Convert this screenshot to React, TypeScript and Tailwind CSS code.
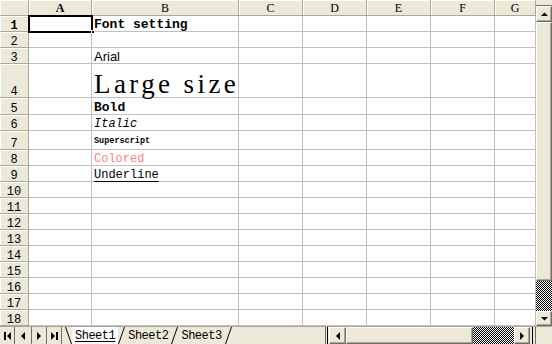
import React from "react";

const MONO = { fontFamily: '"Liberation Mono", "DejaVu Sans Mono", monospace' };
const SERIF = { fontFamily: '"Liberation Serif", "Times New Roman", serif' };

const rowNums = Array.from({ length: 18 }, (_, i) => i + 1);
const cols = ["A", "B", "C", "D", "E", "F", "G"];

function Tri({ dir }: { dir: "up" | "down" | "left" | "right" }) {
  const pts =
    dir === "up"
      ? "0,4 7,4 3.5,0.5"
      : dir === "down"
      ? "0,0 7,0 3.5,3.5"
      : dir === "left"
      ? "4,0 4,8 0,4"
      : "0,0 0,8 4,4";
  const w = dir === "up" || dir === "down" ? 7 : 4;
  const h = dir === "up" || dir === "down" ? 4 : 8;
  return (
    <svg width={w} height={h} viewBox={`0 0 ${w} ${h}`}>
      <polygon points={pts} fill="#000" />
    </svg>
  );
}

function cellContent(r: number) {
  switch (r) {
    case 1:
      return <span className="font-bold text-[13px] leading-[10px] mb-[1px]" style={MONO}>Font setting</span>;
    case 3:
      return <span className="text-[13px] leading-[10px] mb-[1px]" style={{ fontFamily: '"Liberation Sans", Arial, sans-serif' }}>Arial</span>;
    case 4:
      return <span className="text-[27px] leading-[20px] tracking-[3.4px] mb-[3px]" style={SERIF}>Large size</span>;
    case 5:
      return <span className="font-bold text-[13px] leading-[10px] mb-[1px]" style={MONO}>Bold</span>;
    case 6:
      return <span className="italic text-[12px] leading-[10px] mb-[1px]" style={MONO}>Italic</span>;
    case 7:
      return <span className="font-bold text-[8.5px] leading-[8px] mb-[4px]" style={MONO}>Superscript</span>;
    case 8:
      return <span className="text-[12px] leading-[10px] mb-[1px] text-[#FF8080]" style={MONO}>Colored</span>;
    case 9:
      return <span className="text-[12px] leading-[10px] mb-[1px] underline underline-offset-[3px]" style={MONO}>Underline</span>;
    default:
      return null;
  }
}

const checker =
  "bg-[repeating-conic-gradient(#000_0_25%,#fff_0_50%)] bg-[length:2px_2px]";

function Btn3D({ children, className = "" }: { children?: React.ReactNode; className?: string }) {
  return (
    <div
      className={
        "flex items-center justify-center bg-[#ECE9D8] border border-t-[#fff] border-l-[#fff] border-b-[#716F64] border-r-[#716F64] shadow-[inset_-1px_-1px_0_#ACA899] " +
        className
      }
    >
      {children}
    </div>
  );
}

function Slash({ back }: { back?: boolean }) {
  return (
    <svg width="7" height="17" viewBox="0 0 7 17" className="shrink-0">
      {back ? (
        <line x1="0.5" y1="0" x2="6.5" y2="17" stroke="#000" strokeWidth="1" />
      ) : (
        <line x1="6.5" y1="0" x2="0.5" y2="17" stroke="#000" strokeWidth="1" />
      )}
    </svg>
  );
}

export default function App() {
  return (
    <div className="w-[552px] h-[344px] overflow-hidden bg-white flex flex-col select-none">
      <div className="flex h-[326px]">
        {/* sheet grid */}
        <div className="relative w-[536px] grid grid-cols-[29px_63px_147px_64px_64px_64px_64px_41px] grid-rows-[16px_16px_16px_16px_34px_17px_16px_19px_16px_16px_16px_16px_16px_16px_16px_16px_16px_16px_16px]">
          <div className="bg-[#ECE9D8] border-r border-b border-[#ACA899] shadow-[inset_1px_1px_0_#fff]" />
          {cols.map((c) => (
            <div
              key={c}
              className={
                "bg-[#ECE9D8] border-r border-b border-[#ACA899] shadow-[inset_1px_1px_0_#fff] flex items-center justify-center text-[12px] leading-none " +
                (c === "A" ? "font-bold" : "")
              }
              style={SERIF}
            >
              {c}
            </div>
          ))}
          {rowNums.map((r) => (
            <React.Fragment key={r}>
              <div
                className={
                  "bg-[#ECE9D8] border-r border-b border-[#ACA899] shadow-[inset_1px_1px_0_#fff] flex items-end justify-center text-[12px] leading-[10px] " +
                  (r === 1 ? "font-bold" : "")
                }
                style={MONO}
              >
                {r}
              </div>
              {cols.map((c) => (
                <div
                  key={c}
                  className="border-r border-b border-[#C0C0C0] flex items-end pl-[2px] whitespace-nowrap overflow-visible"
                >
                  {c === "B" ? cellContent(r) : null}
                </div>
              ))}
            </React.Fragment>
          ))}
          {/* active cell */}
          <div className="absolute left-[28px] top-[15px] w-[65px] h-[18px] border-2 border-black pointer-events-none" />
          <div className="absolute left-[91px] top-[30px] w-[4px] h-[4px] bg-black border border-white pointer-events-none" />
        </div>
        {/* vertical scrollbar */}
        <div className="w-[16px] flex flex-col bg-[#ECE9D8]">
          <div className="h-[6px] border-b border-[#716F64] bg-[#ECE9D8]" />
          <Btn3D className="h-[16px]">
            <Tri dir="up" />
          </Btn3D>
          <Btn3D className="flex-1" />
          <div className={"h-[30px] " + checker} />
          <Btn3D className="h-[15px]">
            <Tri dir="down" />
          </Btn3D>
        </div>
      </div>
      {/* bottom bar */}
      <div className="h-[18px] flex bg-[#ECE9D8] border-t border-[#ACA899]">
        <div className="flex">
          <div className="w-[15px] flex items-center justify-center gap-[1px] border-r border-[#716F64]">
            <div className="w-[2px] h-[8px] bg-black" />
            <Tri dir="left" />
          </div>
          <div className="w-[17px] flex items-center justify-center border-r border-[#716F64]">
            <Tri dir="left" />
          </div>
          <div className="w-[15px] flex items-center justify-center border-r border-[#716F64]">
            <Tri dir="right" />
          </div>
          <div className="w-[15px] flex items-center justify-center gap-[1px] border-r border-[#716F64]">
            <Tri dir="right" />
            <div className="w-[2px] h-[8px] bg-black" />
          </div>
        </div>
        <div className="flex items-stretch ml-[3px]" style={MONO}>
          <Slash back />
          <div className="px-[3px] bg-white flex items-center text-[12px] tracking-[-0.5px] leading-none underline underline-offset-2">Sheet1</div>
          <Slash />
          <div className="px-[3px] flex items-center text-[12px] tracking-[-0.5px] leading-none">Sheet2</div>
          <Slash />
          <div className="px-[3px] flex items-center text-[12px] tracking-[-0.5px] leading-none">Sheet3</div>
          <Slash />
        </div>
        <div className="flex-1" />
        <div className="w-[6px] flex justify-center gap-[1px]">
          <div className="w-[1px] bg-[#716F64]" />
          <div className="w-[1px] bg-black" />
        </div>
        <Btn3D className="w-[17px]">
          <Tri dir="left" />
        </Btn3D>
        <Btn3D className="w-[127px]" />
        <div className={"w-[41px] " + checker} />
        <Btn3D className="w-[16px]">
          <Tri dir="right" />
        </Btn3D>
        <div className="w-[5px] flex justify-center">
          <div className="w-[1px] bg-black" />
        </div>
        <div className="w-[17px] border-l border-[#716F64]" />
      </div>
    </div>
  );
}
